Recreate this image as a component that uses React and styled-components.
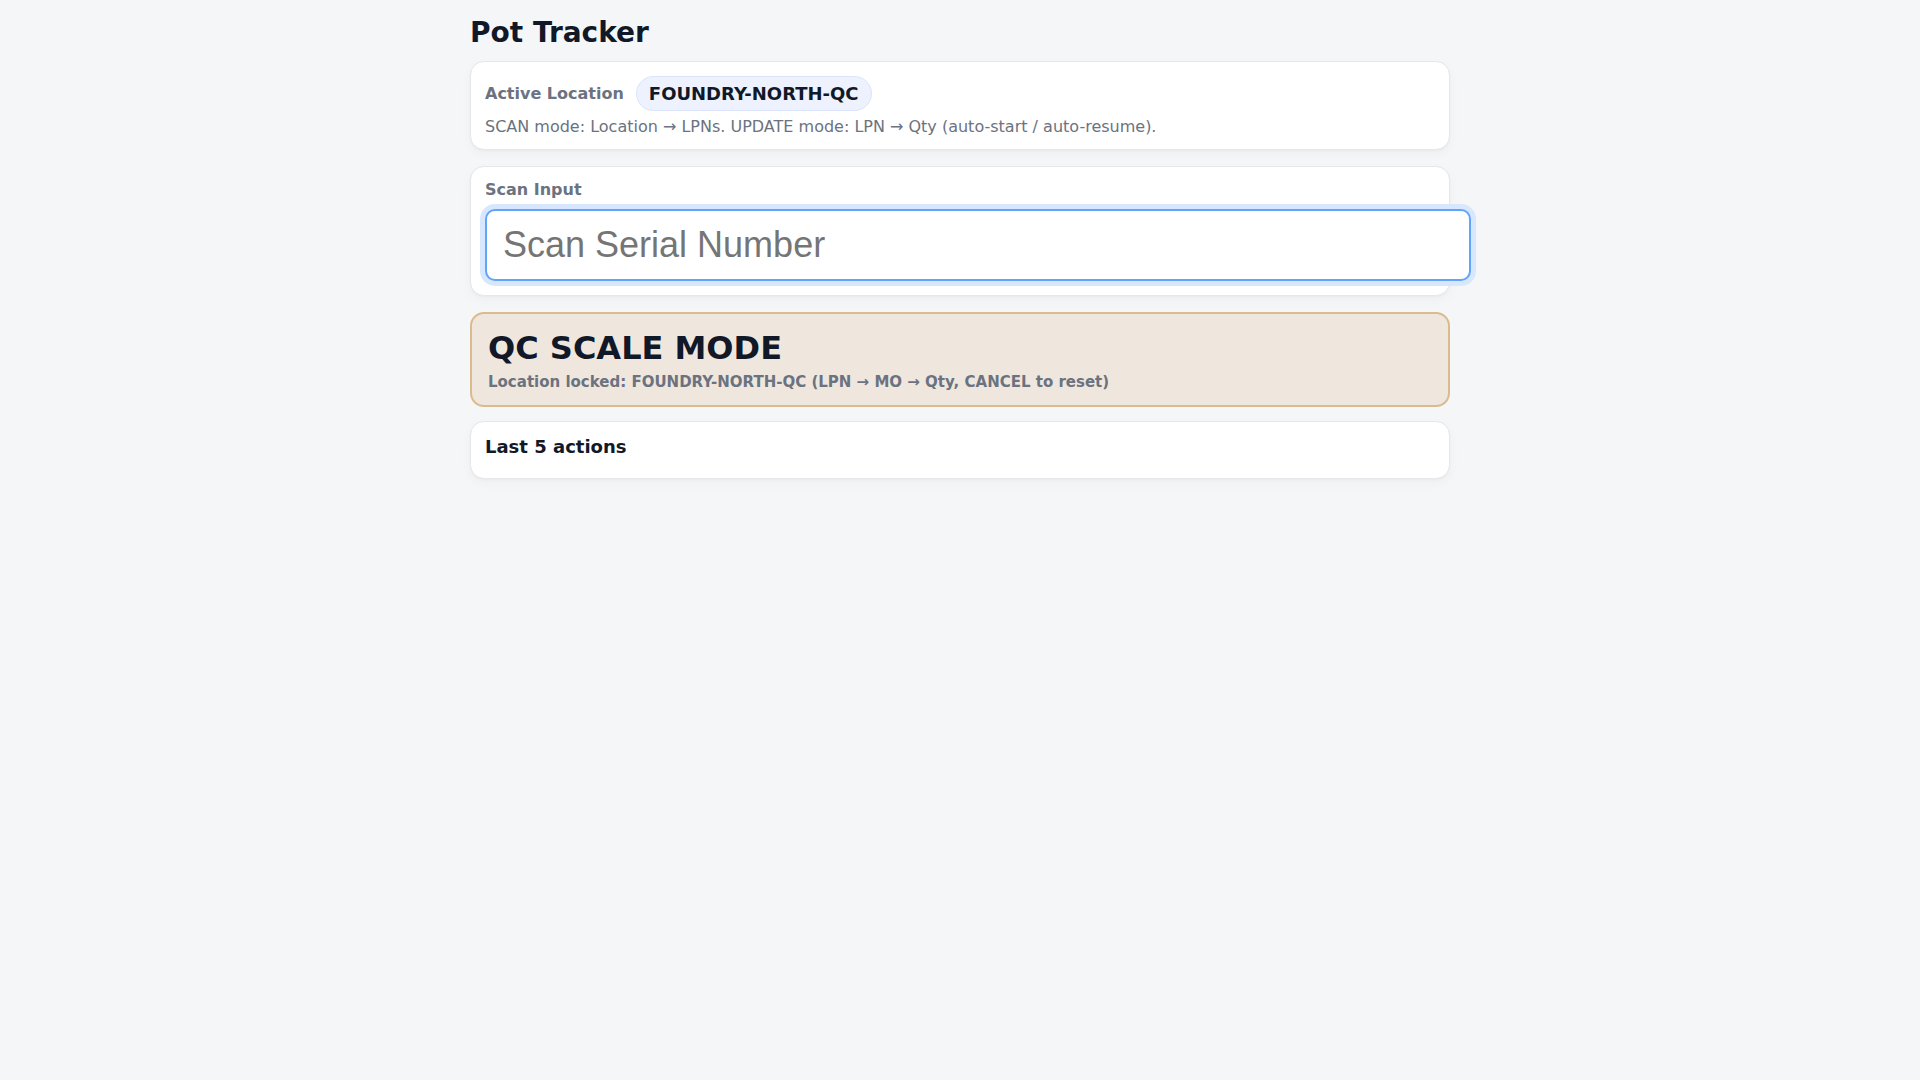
import React from 'react';
import styled, { createGlobalStyle } from 'styled-components';

const GlobalStyle = createGlobalStyle`
    body {
        margin: 0;
        background: #f5f6f8;
        font-family: "DejaVu Sans", "Noto Sans", sans-serif;
        color: #111827;
    }
`;

const Page = styled.div`
    max-width: 980px;
    margin: 0 auto;
    padding-top: 16px;
`;

const Title = styled.h1`
    font-size: 28px;
    line-height: 34px;
    font-weight: bold;
    margin: 0 0 11px;
    color: #111827;
`;

const Card = styled.section`
    background: #fff;
    border: 1px solid #e5e7eb;
    border-radius: 14px;
    padding: ${props => props.tight ? '14px 14px 13px' : '14px'};
    margin-bottom: 16px;
    box-shadow: 0 1px 2px rgba(0, 0, 0, 0.03), 0 4px 12px rgba(0, 0, 0, 0.03);
`;

const LocationRow = styled.div`
    display: flex;
    align-items: center;
    gap: 12px;
`;

const Label = styled.div`
    font-size: 16px;
    line-height: 18px;
    font-weight: bold;
    color: #6b7280;
    margin-bottom: ${props => props.spaced ? '10px' : '0'};
`;

const Badge = styled.span`
    display: inline-block;
    padding: 6px 12px;
    font-size: 18px;
    line-height: 21px;
    font-weight: bold;
    color: #111827;
    background: #eef2ff;
    border: 1px solid #dbe4fb;
    border-radius: 999px;
`;

const Hint = styled.div`
    margin-top: 6px;
    font-size: 16px;
    line-height: 19px;
    color: #6b7280;
`;

const ScanField = styled.input`
    display: block;
    width: 100%;
    padding: 14px 16px;
    font-family: "Liberation Sans", Arial, sans-serif;
    font-size: 36px;
    line-height: 40px;
    color: #111827;
    caret-color: #111827;
    background: #fff;
    border: 2px solid #60a5fa;
    border-radius: 10px;
    outline: none;
    box-shadow: 0 0 0 5px #d7e7fd;

    &::placeholder {
        color: #757575;
    }
`;

const ModeCard = styled.section`
    background: #efe7de;
    border: 2px solid #dbbb8e;
    border-radius: 14px;
    padding: 15px 16px 14px;
    margin-bottom: 14px;
`;

const ModeTitle = styled.div`
    font-size: 32px;
    line-height: 38px;
    font-weight: bold;
    color: #111827;
`;

const ModeNote = styled.div`
    margin-top: 6px;
    font-size: 15px;
    line-height: 18px;
    font-weight: bold;
    color: #6b7280;
`;

const SectionTitle = styled.h3`
    margin: 0 0 6px;
    font-size: 18px;
    line-height: 22px;
    font-weight: bold;
    color: #111827;
`;

export default function App() {
    const location = 'FOUNDRY-NORTH-QC';

    return (
        <Page>
            <GlobalStyle />
            <Title>Pot Tracker</Title>

            <Card tight>
                <LocationRow>
                    <Label>Active Location</Label>
                    <Badge>{location}</Badge>
                </LocationRow>
                <Hint>SCAN mode: Location → LPNs. UPDATE mode: LPN → Qty (auto-start / auto-resume).</Hint>
            </Card>

            <Card>
                <Label spaced>Scan Input</Label>
                <ScanField autoFocus placeholder="Scan Serial Number" />
            </Card>

            <ModeCard>
                <ModeTitle>QC SCALE MODE</ModeTitle>
                <ModeNote>Location locked: {location} (LPN → MO → Qty, CANCEL to reset)</ModeNote>
            </ModeCard>

            <Card>
                <SectionTitle>Last 5 actions</SectionTitle>
            </Card>
        </Page>
    );
}
